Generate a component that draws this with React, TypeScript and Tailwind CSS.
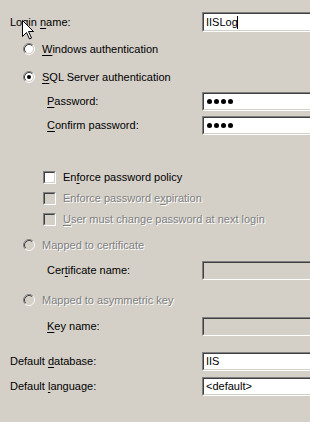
import React from "react";

function Radio({ checked = false, disabled = false }: { checked?: boolean; disabled?: boolean }) {
  return (
    <svg width="12" height="12" viewBox="0 0 12 12" className="shrink-0">
      <circle cx="6" cy="6" r="4.2" fill={disabled ? "#d4d0c8" : "#ffffff"} />
      <path d="M2.11 9.89 A5.5 5.5 0 0 1 9.89 2.11" fill="none" stroke="#808080" strokeWidth="1" />
      <path d="M9.89 2.11 A5.5 5.5 0 0 1 2.11 9.89" fill="none" stroke="#ffffff" strokeWidth="1" />
      <path d="M2.82 9.18 A4.5 4.5 0 0 1 9.18 2.82" fill="none" stroke="#404040" strokeWidth="1" />
      <path d="M9.18 2.82 A4.5 4.5 0 0 1 2.82 9.18" fill="none" stroke="#d4d0c8" strokeWidth="1" />
      {checked && <circle cx="6" cy="6" r="2" fill="#000000" />}
    </svg>
  );
}

function Check({ disabled = false }: { disabled?: boolean }) {
  return (
    <div className="w-[13px] h-[13px] shrink-0 border-t border-l border-t-[#808080] border-l-[#808080] border-b border-r border-b-white border-r-white">
      <div
        className={
          disabled
            ? "w-full h-full border-t border-l border-t-[#404040] border-l-[#404040] border-b border-r border-b-[#d4d0c8] border-r-[#d4d0c8] bg-[#d4d0c8]"
            : "w-full h-full border-t border-l border-t-[#404040] border-l-[#404040] border-b border-r border-b-[#d4d0c8] border-r-[#d4d0c8] bg-white"
        }
      />
    </div>
  );
}

function TextBox({ children, disabled = false }: { children?: React.ReactNode; disabled?: boolean }) {
  return (
    <div className="w-[130px] h-full shrink-0 border-t border-l border-t-[#808080] border-l-[#808080] border-b border-r border-b-white border-r-white">
      <div
        className={
          disabled
            ? "w-full h-full flex items-center pl-[2px] border-t border-l border-t-[#404040] border-l-[#404040] border-b border-r border-b-[#d4d0c8] border-r-[#d4d0c8] bg-[#d4d0c8]"
            : "w-full h-full flex items-center pl-[2px] border-t border-l border-t-[#404040] border-l-[#404040] border-b border-r border-b-[#d4d0c8] border-r-[#d4d0c8] bg-white"
        }
      >
        {children}
      </div>
    </div>
  );
}

function U({ children }: { children: React.ReactNode }) {
  return <span className="underline underline-offset-[2px]">{children}</span>;
}

function Dots() {
  return (
    <div className="flex gap-[2px] pl-[1px]">
      <div className="w-[5px] h-[5px] rounded-full bg-black" />
      <div className="w-[5px] h-[5px] rounded-full bg-black" />
      <div className="w-[5px] h-[5px] rounded-full bg-black" />
      <div className="w-[5px] h-[5px] rounded-full bg-black" />
    </div>
  );
}

const dis = "text-[#808080] [text-shadow:1px_1px_0_#ffffff]";

export default function App() {
  return (
    <div className="relative w-[310px] h-[422px] overflow-hidden bg-[#d4d0c8] text-black text-[11px] leading-[13px] font-['Liberation_Sans',Arial,sans-serif]">
      <div className="flex flex-col">
        {/* Login name */}
        <div className="flex items-center h-[20px] mt-[12px]">
          <div className="w-[202px] shrink-0 pl-[10px]">
            Login <U>n</U>ame:
          </div>
          <TextBox>
            <span>IISLog</span>
            <span className="w-px h-[13px] bg-black -ml-px" />
          </TextBox>
        </div>

        {/* Windows auth */}
        <div className="flex items-center h-[14px] mt-[10px] pl-[23px] gap-[7px]">
          <Radio />
          <span>
            <U>W</U>indows authentication
          </span>
        </div>

        {/* SQL auth */}
        <div className="flex items-center h-[14px] mt-[14px] pl-[23px] gap-[7px]">
          <Radio checked />
          <span>
            <U>S</U>QL Server authentication
          </span>
        </div>

        {/* Password */}
        <div className="flex items-center h-[19px] mt-[8px]">
          <div className="w-[202px] shrink-0 pl-[47px]">
            <U>P</U>assword:
          </div>
          <TextBox>
            <Dots />
          </TextBox>
        </div>

        {/* Confirm */}
        <div className="flex items-center h-[19px] mt-[5px]">
          <div className="w-[202px] shrink-0 pl-[47px]">
            <U>C</U>onfirm password:
          </div>
          <TextBox>
            <Dots />
          </TextBox>
        </div>

        {/* Checkboxes */}
        <div className="flex items-center h-[13px] mt-[36px] pl-[43px] gap-[7px]">
          <Check />
          <span>
            En<U>f</U>orce password policy
          </span>
        </div>
        <div className="flex items-center h-[13px] mt-[8px] pl-[43px] gap-[7px]">
          <Check disabled />
          <span className={dis}>
            Enforce password e<U>x</U>piration
          </span>
        </div>
        <div className="flex items-center h-[13px] mt-[8px] pl-[43px] gap-[7px]">
          <Check disabled />
          <span className={dis}>
            <U>U</U>ser must change password at next login
          </span>
        </div>

        {/* Mapped to certificate */}
        <div className="flex items-center h-[14px] mt-[12px] pl-[23px] gap-[7px]">
          <Radio disabled />
          <span className={dis}>Mapped to certificate</span>
        </div>

        <div className="flex items-center h-[19px] mt-[9px]">
          <div className="w-[202px] shrink-0 pl-[47px]">
            Cer<U>t</U>ificate name:
          </div>
          <TextBox disabled />
        </div>

        {/* Mapped to asymmetric key */}
        <div className="flex items-center h-[14px] mt-[13px] pl-[23px] gap-[7px]">
          <Radio disabled />
          <span className={dis}>Mapped to asymmetric key</span>
        </div>

        <div className="flex items-center h-[19px] mt-[10px]">
          <div className="w-[202px] shrink-0 pl-[47px]">
            <U>K</U>ey name:
          </div>
          <TextBox disabled />
        </div>

        {/* Default database */}
        <div className="flex items-center h-[19px] mt-[16px]">
          <div className="w-[202px] shrink-0 pl-[10px]">
            Default <U>d</U>atabase:
          </div>
          <TextBox>
            <span>IIS</span>
          </TextBox>
        </div>

        <div className="flex items-center h-[19px] mt-[6px]">
          <div className="w-[202px] shrink-0 pl-[10px]">
            Default <U>l</U>anguage:
          </div>
          <TextBox>
            <span>&lt;default&gt;</span>
          </TextBox>
        </div>
      </div>

      {/* Mouse cursor */}
      <svg width="13" height="20" viewBox="0 0 13 20" className="absolute left-[22px] top-[20px]">
        <path d="M0.5 0.5 L0.5 16.5 L4.5 12.5 L7.5 19 L9.5 18 L6.5 11.5 L11.5 11.5 Z" fill="#ffffff" stroke="#000000" strokeWidth="1" strokeLinejoin="miter" />
      </svg>
    </div>
  );
}
